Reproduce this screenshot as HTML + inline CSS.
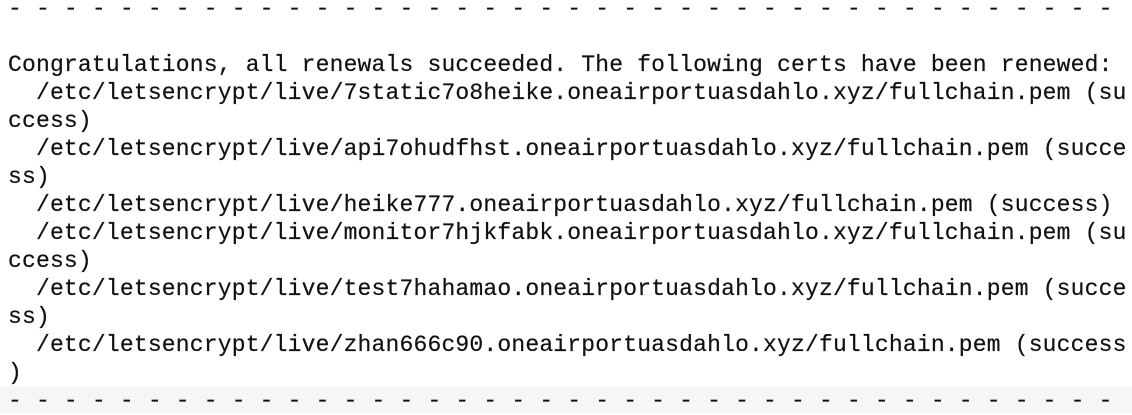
<!DOCTYPE html>
<html><head><style>
html,body{margin:0;padding:0;background:#fff;width:1132px;height:414px;overflow:hidden}
pre{position:absolute;left:8px;top:-5px;margin:0;font-family:"Liberation Mono",monospace;font-size:23px;letter-spacing:0.18px;line-height:28px;color:#111;white-space:pre;-webkit-text-stroke:0.2px #111}
.band{position:absolute;left:0;top:386px;width:1132px;height:28px;background:#f6f6f6}
</style></head><body>
<div class="band"></div>
<pre>- - - - - - - - - - - - - - - - - - - - - - - - - - - - - - - - - - - - - - - -

Congratulations, all renewals succeeded. The following certs have been renewed:
  /etc/letsencrypt/live/7static7o8heike.oneairportuasdahlo.xyz/fullchain.pem (su
ccess)
  /etc/letsencrypt/live/api7ohudfhst.oneairportuasdahlo.xyz/fullchain.pem (succe
ss)
  /etc/letsencrypt/live/heike777.oneairportuasdahlo.xyz/fullchain.pem (success)
  /etc/letsencrypt/live/monitor7hjkfabk.oneairportuasdahlo.xyz/fullchain.pem (su
ccess)
  /etc/letsencrypt/live/test7hahamao.oneairportuasdahlo.xyz/fullchain.pem (succe
ss)
  /etc/letsencrypt/live/zhan666c90.oneairportuasdahlo.xyz/fullchain.pem (success
)
- - - - - - - - - - - - - - - - - - - - - - - - - - - - - - - - - - - - - - - -</pre>
</body></html>
